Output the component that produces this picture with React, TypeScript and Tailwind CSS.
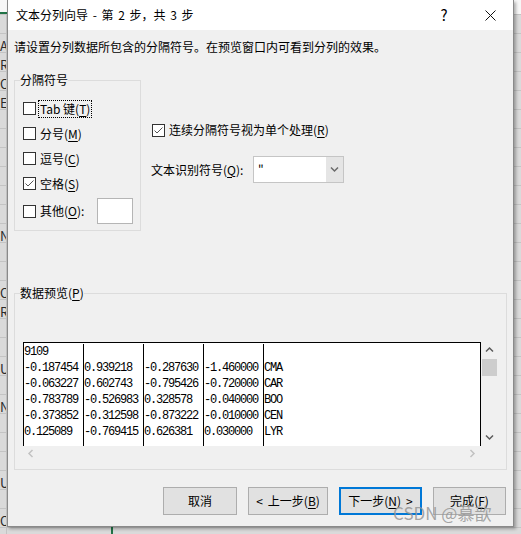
import type { ReactNode } from "react";

const sheetRows = ["", "A", "R", "O", "EN", "", "", "", "", "", "", "N", "", "", "O", "R", "", "", "U", "", "N", "", "", "", "U", "", "O"];

const preview = [
  ["9109", "", "", "", ""],
  ["-0.187454", "0.939218", "-0.287630", "-1.460000", "CMA"],
  ["-0.063227", "0.602743", "-0.795426", "-0.720000", "CAR"],
  ["-0.783789", "-0.526983", "0.328578", "-0.040000", "BOO"],
  ["-0.373852", "-0.312598", "-0.873222", "-0.010000", "CEN"],
  ["0.125089", "-0.769415", "0.626381", "0.030000", "LYR"],
];

function Key({ k }: { k: string }) {
  return (
    <>
      (<span className="underline underline-offset-2">{k}</span>)
    </>
  );
}

function Box({ checked }: { checked?: boolean }) {
  return (
    <span className="flex h-[13px] w-[13px] shrink-0 items-center justify-center border border-[#333333] bg-white">
      {checked && (
        <svg width="11" height="11" viewBox="0 0 11 11">
          <path d="M1.5 5.5 L4 8 L9.5 2.5" fill="none" stroke="#555555" strokeWidth="1" />
        </svg>
      )}
    </span>
  );
}

function Row({ children, checked, tall }: { children: ReactNode; checked?: boolean; tall?: boolean }) {
  return (
    <div className={tall ? "flex h-[30px] items-center" : "flex h-[25px] items-center"}>
      <Box checked={checked} />
      {children}
    </div>
  );
}

function Chevron({ dir, color }: { dir: "up" | "down" | "left" | "right"; color: string }) {
  const d = {
    up: "M1 5.5 L4.5 2 L8 5.5",
    down: "M1 2.5 L4.5 6 L8 2.5",
    left: "M5.5 1 L2 4.5 L5.5 8",
    right: "M2.5 1 L6 4.5 L2.5 8",
  }[dir];
  return (
    <svg width="9" height="9" viewBox="0 0 9 9">
      <path d={d} fill="none" stroke={color} strokeWidth="1.5" />
    </svg>
  );
}

export default function App() {
  return (
    <div className="relative h-[534px] w-[521px] overflow-hidden bg-[#dadada] font-['Noto_Sans_CJK_SC','Noto_Sans',sans-serif] text-black">
      {/* spreadsheet behind the dialog */}
      <div className="h-[15px] border-b border-[#c4c4c4] bg-[#f7f7f7]">
        <div className="h-[14px] w-[8px] border-b-2 border-[#217346]" />
      </div>
      <div className="flex">
        <div className="w-[7px] overflow-hidden border-r border-[#c4c4c4]">
          {sheetRows.map((t, i) => (
            <div key={i} className="h-[19px] whitespace-nowrap border-b border-[#c4c4c4] pt-[3px] text-[13px] leading-[18px] text-[#2a2a2a]">
              {t}
            </div>
          ))}
        </div>
        <div className="h-[519px] flex-1 bg-[repeating-linear-gradient(to_bottom,#dadada_0px,#dadada_18px,#c4c4c4_18px,#c4c4c4_19px)]" />
      </div>
      <div className="absolute left-[111px] top-[527px] h-[7px] w-[2px] bg-[#217346]" />

      {/* dialog */}
      <div className="absolute left-[7px] top-0 flex h-[527px] w-[507px] flex-col border-x border-b border-[#8a8a8a] bg-[#f0f0f0] text-[12px] leading-[16px] shadow-[2px_2px_3px_rgba(0,0,0,0.3)]">
        <div className="flex h-[30px] items-center bg-white pl-[8px]">
          <span className="[word-spacing:2px]">文本分列向导 - 第 2 步，共 3 步</span>
          <div className="ml-auto flex h-full w-[46px] items-center justify-center text-[15px]">?</div>
          <div className="flex h-full w-[46px] items-center justify-center">
            <svg width="11" height="11" viewBox="0 0 11 11">
              <path d="M0.5 0.5 L10.5 10.5 M10.5 0.5 L0.5 10.5" stroke="#111111" strokeWidth="1" />
            </svg>
          </div>
        </div>

        <p className="ml-[6px] mt-[9px]">请设置分列数据所包含的分隔符号。在预览窗口内可看到分列的效果。</p>

        <div className="mt-[17px] flex">
          <fieldset className="ml-[6px] h-[159px] w-[127px] border border-[#dcdcdc]">
            <legend className="ml-[5px] leading-[16px]">分隔符号</legend>
            <div className="flex flex-col pl-[8px] pt-[8px]">
              <Row>
                <span className="ml-[2px] border border-dotted border-black px-[1px]">
                  Tab 键<Key k="T" />
                </span>
              </Row>
              <Row>
                <span className="ml-[4px]">
                  分号<Key k="M" />
                </span>
              </Row>
              <Row>
                <span className="ml-[4px]">
                  逗号<Key k="C" />
                </span>
              </Row>
              <Row checked>
                <span className="ml-[4px]">
                  空格<Key k="S" />
                </span>
              </Row>
              <Row tall>
                <span className="ml-[4px]">
                  其他<Key k="O" />:
                </span>
                <div className="ml-auto mr-[7px] h-[26px] w-[36px] border border-[#b5b5b5] bg-white" />
              </Row>
            </div>
          </fieldset>

          <div className="ml-[10px] mt-[48px] flex flex-col">
            <div className="flex h-[20px] items-center">
              <span className="ml-[1px]">
                <Box checked />
              </span>
              <span className="ml-[4px]">
                连续分隔符号视为单个处理<Key k="R" />
              </span>
            </div>
            <div className="mt-[16px] flex items-center">
              <span className="w-[102px]">
                文本识别符号<Key k="Q" />:
              </span>
              <div className="flex h-[27px] w-[91px] border border-[#c5c5c5] bg-white">
                <span className="flex-1 pl-[4px] pt-[4px]">"</span>
                <div className="flex w-[17px] items-center justify-center bg-[#e5e5e5]">
                  <Chevron dir="down" color="#6a6a6a" />
                </div>
              </div>
            </div>
          </div>
        </div>

        <fieldset className="ml-[6px] mt-[54px] h-[185px] w-[493px] border border-[#dcdcdc]">
          <legend className="ml-[5px] leading-[16px]">
            数据预览<Key k="P" />
          </legend>
          <div className="flex pl-[8px] pt-[41px]">
            <div className="flex w-[458px] flex-col">
              <div className="flex h-[104px] border-x border-t border-black bg-white pt-[1px] font-['Liberation_Mono',monospace] text-[12px] leading-[16px] tracking-[-1.2px]">
                {[0, 1, 2, 3, 4].map((c) => (
                  <div key={c} className={c < 4 ? "w-[60px] border-r border-black" : "flex-1"}>
                    {preview.map((r, i) => (
                      <div key={i} className="h-[16px] whitespace-pre">
                        {r[c]}
                      </div>
                    ))}
                  </div>
                ))}
              </div>
              <div className="flex h-[14px] items-center justify-between px-[4px]">
                <Chevron dir="left" color="#c2c2c2" />
                <Chevron dir="right" color="#c2c2c2" />
              </div>
            </div>
            <div className="flex h-[104px] w-[17px] flex-col">
              <div className="flex h-[17px] items-center justify-center">
                <Chevron dir="up" color="#5a5a5a" />
              </div>
              <div className="mx-[1px] h-[17px] bg-[#cdcdcd]" />
              <div className="flex-1" />
              <div className="flex h-[17px] items-center justify-center">
                <Chevron dir="down" color="#5a5a5a" />
              </div>
            </div>
          </div>
        </fieldset>

        <div className="mt-[17px] flex justify-end gap-[11px] pr-[7px]">
          <button className="flex h-[28px] w-[74px] items-center justify-center border border-[#adadad] bg-[#e1e1e1]">取消</button>
          <button className="flex h-[28px] w-[80px] items-center justify-center border border-[#adadad] bg-[#e1e1e1]">
            <span className="mr-[5px]">&lt;</span>
            <span>
              上一步<Key k="B" />
            </span>
          </button>
          <button className="flex h-[28px] w-[83px] items-center justify-center border-2 border-[#0078d7] bg-[#e1e1e1]">
            <span>
              下一步<Key k="N" />
            </span>
            <span className="ml-[5px]">&gt;</span>
          </button>
          <button className="flex h-[28px] w-[73px] items-center justify-center border border-[#adadad] bg-[#e1e1e1]">
            完成<Key k="F" />
          </button>
        </div>
      </div>

      <div className="absolute left-[393px] top-[502px] whitespace-nowrap text-[17px] leading-[22px] text-[rgba(150,150,150,0.85)]">
        CSDN @慕歆
      </div>
    </div>
  );
}
